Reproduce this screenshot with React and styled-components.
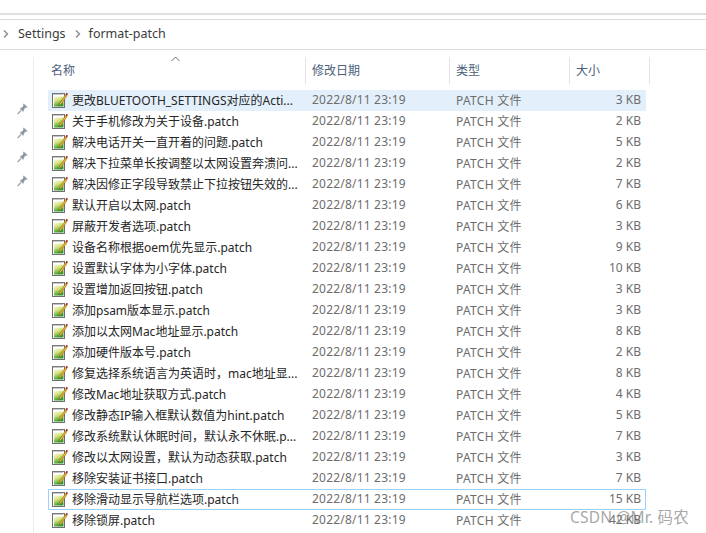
import React from "react";
import styled, { createGlobalStyle } from "styled-components";

const GlobalStyle = createGlobalStyle`
  html, body {
    margin: 0;
    padding: 0;
    background: #fff;
  }
`;

const Window = styled.div`
  position: relative;
  width: 706px;
  height: 533px;
  overflow: hidden;
  background: #fff;
  font-family: "Noto Sans", "Noto Sans CJK SC", sans-serif;
  font-size: 12px;
`;

const RibbonEdge = styled.div`
  height: 4px;
  margin-top: 13px;
  border-top: 2px solid #e0e0e0;
`;

const AddressBar = styled.div`
  display: flex;
  align-items: center;
  box-sizing: border-box;
  height: 31px;
  padding-bottom: 2px;
  border-top: 1px solid #dcdcdc;
  border-bottom: 1px solid #dcdcdc;
  color: #3c3c3c;
  font-size: 12.5px;
`;

const Crumb = styled.span`
  margin: 0 9px 0 8px;
  &:first-of-type {
    margin-left: 9px;
  }
`;

const Chevron = styled.svg`
  flex: none;
  margin-left: ${(props) => props.$left || 0}px;
`;

const Body = styled.div`
  display: flex;
  height: 483px;
`;

const NavPane = styled.div`
  flex: none;
  display: flex;
  flex-direction: column;
  align-items: center;
  gap: 12px;
  box-sizing: border-box;
  width: 34px;
  margin-top: 7px;
  padding: 46px 0 0 11px;
  border-right: 1px solid #ececec;
`;

const Pin = styled.svg`
  display: block;
`;

const FileList = styled.div`
  flex: none;
  width: 616px;
  margin-left: 14px;
  padding-top: 7px;
`;

const HeaderRow = styled.div`
  position: relative;
  display: grid;
  grid-template-columns: 258px 144px 120px 80px;
  height: 27px;
  margin-bottom: 6px;
  color: #4c607a;
`;

const HeaderCell = styled.div`
  display: flex;
  align-items: center;
  padding-left: ${(props) => props.$pad}px;
  padding-bottom: 2px;
  border-right: 1px solid #e5e5e5;
`;

const SortArrow = styled.svg`
  position: absolute;
  left: 123px;
  top: -1px;
`;

const Row = styled.div`
  display: grid;
  grid-template-columns: 257px 144px 120px 77px;
  box-sizing: border-box;
  width: 598px;
  height: 21px;
  padding-bottom: 2px;
  align-items: center;
  color: #6d6d6d;
  background: ${(props) => (props.$hot ? "#e3f0fb" : "transparent")};
  box-shadow: ${(props) => (props.$focus ? "inset 0 0 0 1px #99d1ff" : "none")};
`;

const NameCell = styled.div`
  display: flex;
  align-items: center;
  min-width: 0;
  padding-left: 4px;
  color: #262626;
`;

const NameText = styled.span`
  margin-left: 4px;
  white-space: nowrap;
  overflow: hidden;
`;

const DateCell = styled.div`
  padding-left: 7px;
  letter-spacing: 0.2px;
  white-space: nowrap;
`;

const TypeCell = styled.div`
  padding-left: 7px;
  letter-spacing: 0.3px;
  white-space: nowrap;
`;

const SizeCell = styled.div`
  padding-right: 5px;
  text-align: right;
  white-space: nowrap;
`;

const Watermark = styled.div`
  position: absolute;
  left: 570px;
  top: 505px;
  color: rgba(110, 110, 110, 0.62);
  font-size: 15.5px;
  letter-spacing: 0.2px;
  white-space: nowrap;
`;

const files = [
  ["更改BLUETOOTH_SETTINGS对应的Acti...", "3 KB"],
  ["关于手机修改为关于设备.patch", "2 KB"],
  ["解决电话开关一直开着的问题.patch", "5 KB"],
  ["解决下拉菜单长按调整以太网设置奔溃问...", "2 KB"],
  ["解决因修正字段导致禁止下拉按钮失效的...", "7 KB"],
  ["默认开启以太网.patch", "6 KB"],
  ["屏蔽开发者选项.patch", "3 KB"],
  ["设备名称根据oem优先显示.patch", "9 KB"],
  ["设置默认字体为小字体.patch", "10 KB"],
  ["设置增加返回按钮.patch", "3 KB"],
  ["添加psam版本显示.patch", "3 KB"],
  ["添加以太网Mac地址显示.patch", "8 KB"],
  ["添加硬件版本号.patch", "2 KB"],
  ["修复选择系统语言为英语时，mac地址显...", "8 KB"],
  ["修改Mac地址获取方式.patch", "4 KB"],
  ["修改静态IP输入框默认数值为hint.patch", "5 KB"],
  ["修改系统默认休眠时间，默认永不休眠.p...", "7 KB"],
  ["修改以太网设置，默认为动态获取.patch", "3 KB"],
  ["移除安装证书接口.patch", "7 KB"],
  ["移除滑动显示导航栏选项.patch", "15 KB"],
  ["移除锁屏.patch", "42 KB"],
];

const ChevronIcon = ({ left }) => (
  <Chevron $left={left} width="6" height="8" viewBox="0 0 6 8">
    <path d="M1 0.5 L4.5 4 L1 7.5" fill="none" stroke="#8a8a8a" strokeWidth="1.4" />
  </Chevron>
);

const PinIcon = () => (
  <Pin width="11" height="12" viewBox="0 0 11 12">
    <path
      d="M6.5 0.5 L10.5 4 L9 5 L8.3 4.6 L6.6 7.4 L6.4 9 L2.6 5.4 L4.2 5 L6.6 2.8 L6 1.6 Z"
      fill="#8d99a3"
    />
    <path d="M4 7.4 L0.6 11.2" stroke="#8d99a3" strokeWidth="1.1" />
  </Pin>
);

const PatchIcon = () => (
  <svg width="16" height="16" viewBox="0 0 16 16" style={{ flex: "none" }}>
    <defs>
      <linearGradient id="patchGreen" x1="0" y1="0" x2="0.4" y2="1">
        <stop offset="0" stopColor="#fbfbe6" />
        <stop offset="0.45" stopColor="#d5e27c" />
        <stop offset="1" stopColor="#2f9a32" />
      </linearGradient>
    </defs>
    <rect x="0.5" y="1.5" width="12" height="14" fill="#fff" stroke="#6f6f6f" />
    <path d="M2 1 V3 M4 1 V3 M6 1 V3 M8 1 V3 M10 1 V3" stroke="#8a8a8a" strokeWidth="1" />
    <rect x="2" y="4.5" width="9.5" height="10" fill="url(#patchGreen)" />
    <path d="M7.5 11.5 L13.6 2.6 L15 3.6 L9 12.4 L7 13.6 Z" fill="#f1b52c" stroke="#7f5a12" strokeWidth="0.5" />
    <path d="M13.6 2.6 L14.6 0.8 L16 1.8 L15 3.6 Z" fill="#a5281f" />
  </svg>
);

const App = () => (
  <>
    <GlobalStyle />
    <Window>
      <RibbonEdge />
      <AddressBar>
        <ChevronIcon left={3} />
        <Crumb>Settings</Crumb>
        <ChevronIcon />
        <Crumb>format-patch</Crumb>
      </AddressBar>
      <Body>
        <NavPane>
          <PinIcon />
          <PinIcon />
          <PinIcon />
          <PinIcon />
        </NavPane>
        <FileList>
          <HeaderRow>
            <SortArrow width="9" height="6" viewBox="0 0 9 6">
              <path d="M0.5 5 L4.5 1 L8.5 5" fill="none" stroke="#6d6d6d" />
            </SortArrow>
            <HeaderCell $pad={3}>名称</HeaderCell>
            <HeaderCell $pad={6}>修改日期</HeaderCell>
            <HeaderCell $pad={6}>类型</HeaderCell>
            <HeaderCell $pad={6}>大小</HeaderCell>
          </HeaderRow>
          {files.map(([name, size], i) => (
            <Row key={name} $hot={i === 0} $focus={i === 19}>
              <NameCell>
                <PatchIcon />
                <NameText>{name}</NameText>
              </NameCell>
              <DateCell>2022/8/11 23:19</DateCell>
              <TypeCell>PATCH 文件</TypeCell>
              <SizeCell>{size}</SizeCell>
            </Row>
          ))}
        </FileList>
      </Body>
      <Watermark>CSDN @Mr. 码农</Watermark>
    </Window>
  </>
);

export default App;
